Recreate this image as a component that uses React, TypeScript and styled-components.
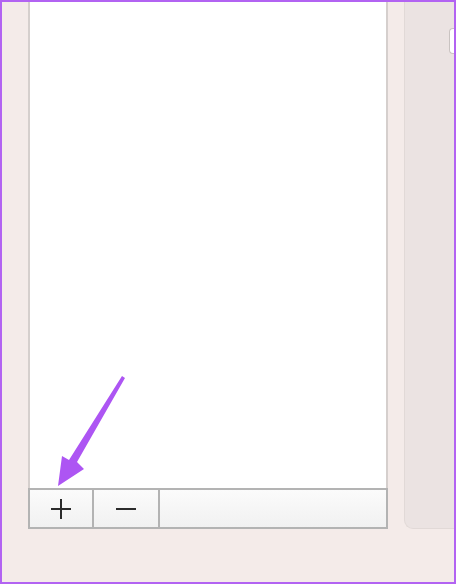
import React from "react";
import styled, { createGlobalStyle } from "styled-components";

const GlobalStyle = createGlobalStyle`
  html, body {
    margin: 0;
    padding: 0;
    background: #ffffff;
    font-family: "Liberation Sans", Arial, sans-serif;
  }
`;

export default function App() {
  return (
    <>
      <GlobalStyle />
      <Frame>
        <ListColumn>
          <ListArea />
          <ButtonBar>
            <BarButton $width={62} aria-label="Add">
              <PlusIcon />
            </BarButton>
            <BarButton $width={64} aria-label="Remove">
              <MinusIcon />
            </BarButton>
            <BarFiller />
          </ButtonBar>
        </ListColumn>
        <SidePanel>
          <SideTab />
        </SidePanel>
        <Arrow viewBox="0 0 456 584" aria-hidden="true">
          <path d="M122 376 L125 378 L77 462 L84 469 L58 486 L62 456 L69 460 Z" fill="#ad55f3" />
        </Arrow>
      </Frame>
    </>
  );
}

const PlusIcon = () => (
  <svg width="22" height="22" viewBox="0 0 22 22">
    <path d="M11 1 V21 M1 11 H21" stroke="#2b2b2b" strokeWidth="2" />
  </svg>
);

const MinusIcon = () => (
  <svg width="22" height="22" viewBox="0 0 22 22">
    <path d="M1 11 H21" stroke="#2b2b2b" strokeWidth="2" />
  </svg>
);

const Frame = styled.div`
  position: relative;
  box-sizing: border-box;
  width: 456px;
  height: 584px;
  border: 2px solid #b263f2;
  border-top-width: 2px;
  background: #f4ebe9;
  display: flex;
  gap: 16px;
  padding-left: 26px;
  overflow: hidden;
`;

const ListColumn = styled.div`
  width: 360px;
  display: flex;
  flex-direction: column;
`;

const ListArea = styled.div`
  height: 486px;
  box-sizing: border-box;
  background: #ffffff;
  border-left: 2px solid #d5cfcd;
  border-right: 2px solid #d5cfcd;
`;

const ButtonBar = styled.div`
  box-sizing: border-box;
  height: 41px;
  display: flex;
  border: 2px solid #b3b3b3;
  background: linear-gradient(#fbfbfb, #f1f1f1);
`;

const BarButton = styled.button<{ $width: number }>`
  width: ${(p) => p.$width + 2}px;
  box-sizing: border-box;
  padding: 0;
  margin: 0;
  border: none;
  border-right: 2px solid #b3b3b3;
  background: transparent;
  display: flex;
  align-items: center;
  justify-content: center;
  cursor: pointer;
`;

const BarFiller = styled.div`
  flex: 1;
`;

const SidePanel = styled.div`
  flex: 1;
  height: 527px;
  box-sizing: border-box;
  background: #ebe3e2;
  border: 1px solid #e1d9d7;
  border-top: none;
  border-right: none;
  border-bottom-left-radius: 9px;
  display: flex;
  justify-content: flex-end;
  align-items: flex-start;
  padding-top: 26px;
`;

const SideTab = styled.div`
  width: 4px;
  height: 24px;
  background: #ffffff;
  border: 1px solid #c9c3c1;
  border-right: none;
  border-radius: 4px 0 0 4px;
`;

const Arrow = styled.svg`
  position: absolute;
  left: -2px;
  top: -2px;
  width: 456px;
  height: 584px;
  pointer-events: none;
`;
